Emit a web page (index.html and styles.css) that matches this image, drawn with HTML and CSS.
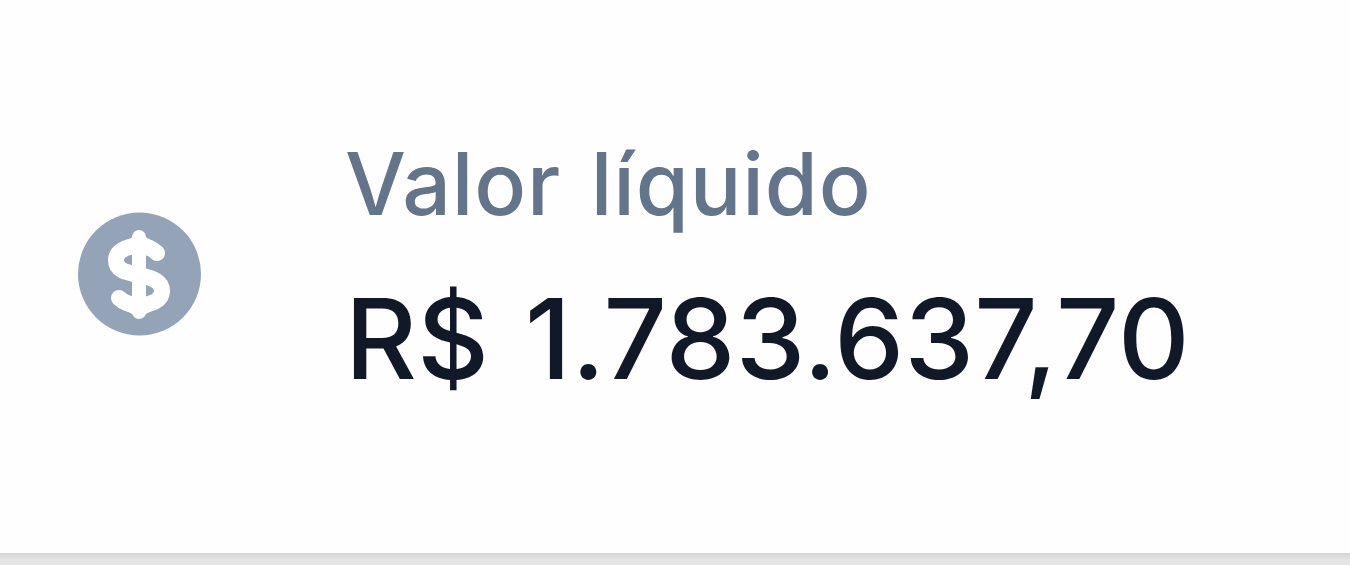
FILE: index.html
```html
<!DOCTYPE html>
<html lang="pt-BR">
<head>
  <meta charset="UTF-8" />
  <meta name="viewport" content="width=device-width, initial-scale=1" />
  <title>Valor líquido</title>
  <link rel="stylesheet" href="styles.css">
</head>
<body>

  <div class="card">
    <svg class="icon" viewBox="0 0 124 124" aria-hidden="true">
      <circle cx="61.5" cy="62" r="61.5" fill="#94a3b8" />
      <g fill="none" stroke="#fff" stroke-linecap="round" stroke-linejoin="round">
        <path stroke-width="14" d="M61 25V100" />
        <path stroke-width="16" d="M79 41C74 36 69 34 61 34C47 34 38 40 38 48C38 58 46 60 61 63C76 66 84 70 84 79C84 88 74 93 61 93C52 93 45 90 41 86" />
        <path stroke-width="8" d="M52 31L61 26L70 31M51 96L61 101L71 96" />
      </g>
    </svg>
    <div class="info">
      <span class="label">Valor líquido</span>
      <span class="value">R$ 1.783.637,70</span>
    </div>
  </div>

</body>
</html>
```

FILE: styles.css
```css
body {
  margin: 0;
  height: 565px;
  overflow: hidden;
  background: linear-gradient(#d6d6d6, #e5e5e6 8px) 0 553px / 100% 12px no-repeat;
  font-family: 'Inter', sans-serif;
}
.card {
  display: flex;
  align-items: flex-start;
  box-sizing: border-box;
  height: 553px;
  padding: 118px 78px 0;
  background-color: #fefefe;
}
.icon {
  flex: none;
  width: 124px;
  height: 124px;
  margin-top: 94px;
  margin-right: 143px;
}
.info {
  display: flex;
  flex-direction: column;
  gap: 5px;
  white-space: nowrap;
}
.label {
  color: #64748b;
  font-size: 86px;
  font-weight: 450;
  line-height: 132px;
  letter-spacing: 0.8px;
  word-spacing: 6px;
}
.value {
  color: #111827;
  font-size: 111px;
  font-weight: 500;
  line-height: 168px;
  letter-spacing: 0.3px;
  word-spacing: 6px;
}
```
